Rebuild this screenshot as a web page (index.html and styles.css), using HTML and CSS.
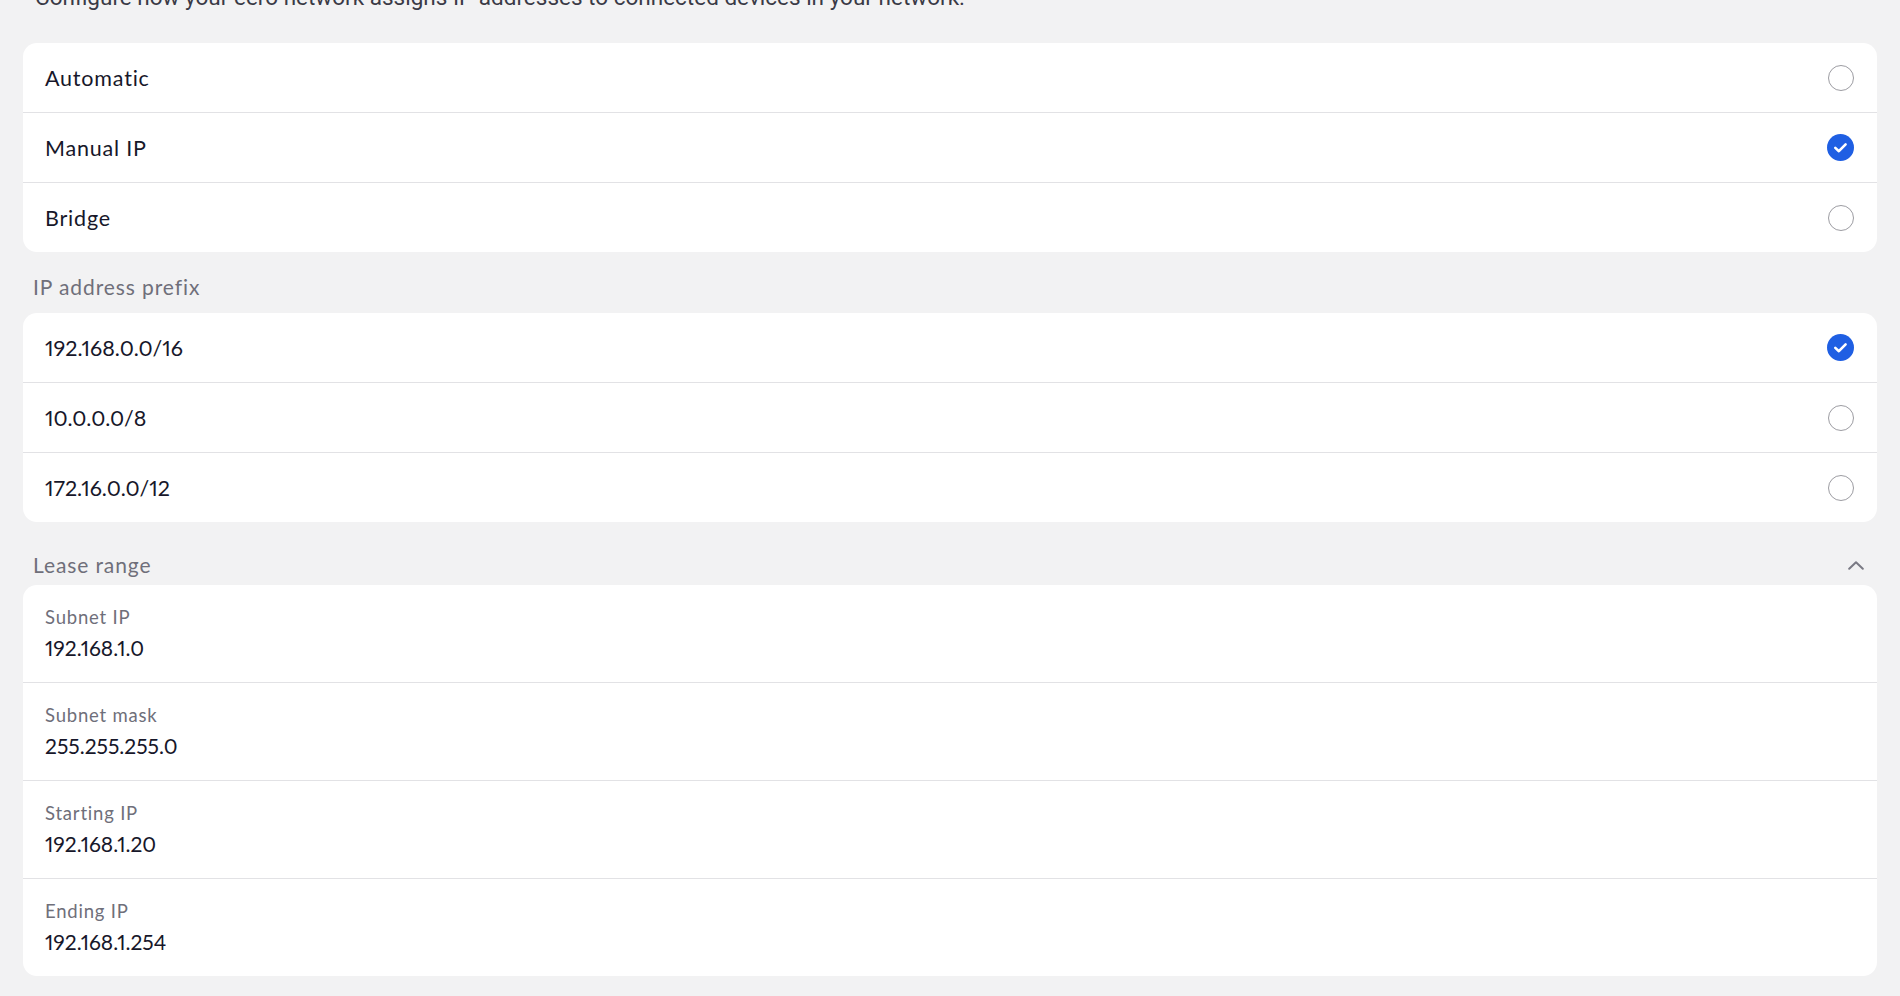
FILE: index.html
```html
<!DOCTYPE html>
<html lang="en">
<head>
  <meta charset="UTF-8">
  <meta name="viewport" content="width=device-width, initial-scale=1">
  <title>DHCP &amp; NAT</title>
  <link rel="stylesheet" href="styles.css">
</head>
<body>

<div class="page">
  <p class="intro">Configure how your eero network assigns IP addresses to connected devices in your network.</p>

  <div class="card">
    <div class="option">
      <span>Automatic</span>
      <span class="radio"></span>
    </div>
    <div class="option">
      <span>Manual IP</span>
      <svg class="check" width="27" height="27" viewBox="0 0 27 27">
        <circle cx="13.5" cy="13.5" r="13.5" fill="#1f5fe3"/>
        <path d="M8.3 13.9 L11.9 17.2 L18.6 10.4" fill="none" stroke="#fff" stroke-width="2.6" stroke-linecap="round" stroke-linejoin="round"/>
      </svg>
    </div>
    <div class="option">
      <span>Bridge</span>
      <span class="radio"></span>
    </div>
  </div>

  <div class="section-label">IP address prefix</div>

  <div class="card">
    <div class="option">
      <span class="num">192.168.0.0/16</span>
      <svg class="check" width="27" height="27" viewBox="0 0 27 27">
        <circle cx="13.5" cy="13.5" r="13.5" fill="#1f5fe3"/>
        <path d="M8.3 13.9 L11.9 17.2 L18.6 10.4" fill="none" stroke="#fff" stroke-width="2.6" stroke-linecap="round" stroke-linejoin="round"/>
      </svg>
    </div>
    <div class="option">
      <span class="num">10.0.0.0/8</span>
      <span class="radio"></span>
    </div>
    <div class="option">
      <span class="num">172.16.0.0/12</span>
      <span class="radio"></span>
    </div>
  </div>

  <div class="section-label collapsible">
    <span>Lease range</span>
    <svg width="16" height="9" viewBox="0 0 16 9">
      <polyline points="1.2,7.8 8,1.3 14.8,7.8" fill="none" stroke="#7a7a84" stroke-width="2" stroke-linecap="round" stroke-linejoin="round"/>
    </svg>
  </div>

  <div class="card">
    <div class="field">
      <div class="field-label">Subnet IP</div>
      <div class="field-value num">192.168.1.0</div>
    </div>
    <div class="field">
      <div class="field-label">Subnet mask</div>
      <div class="field-value num">255.255.255.0</div>
    </div>
    <div class="field">
      <div class="field-label">Starting IP</div>
      <div class="field-value num">192.168.1.20</div>
    </div>
    <div class="field">
      <div class="field-label">Ending IP</div>
      <div class="field-value num">192.168.1.254</div>
    </div>
  </div>
</div>

</body>
</html>
```

FILE: styles.css
```css
body {
  background-color: #f2f2f3;
  color: #17172a;
  font-family: Lato, "Open Sans", sans-serif;
  margin: 0;
}

.page {
  padding: 0 23px 20px;
}

.intro {
  font-family: Roboto, sans-serif;
  font-size: 22.5px;
  line-height: 26px;
  color: #3a3a46;
  margin: -16px 0 33px 12px;
  height: 26px;
  white-space: nowrap;
}

.card {
  background-color: #ffffff;
  border-radius: 14px;
  overflow: hidden;
}

.option {
  display: flex;
  align-items: center;
  justify-content: space-between;
  height: 69px;
  padding: 0 23px 0 22px;
  font-size: 21.5px;
  letter-spacing: 0.8px;
}

/* narrow ones in the addresses */
.num {
  font-variant-numeric: proportional-nums;
  letter-spacing: 0;
}

.option + .option,
.field + .field {
  border-top: 1px solid #e2e2e5;
}

.radio {
  width: 24px;
  height: 24px;
  border: 1.5px solid #9c9ca2;
  border-radius: 50%;
}

.check {
  display: block;
}

.section-label {
  font-size: 21px;
  line-height: 24px;
  letter-spacing: 0.9px;
  color: #6f6f7a;
  padding-left: 10px;
  margin: 23px 0 14px;
}

.collapsible {
  display: flex;
  align-items: center;
  justify-content: space-between;
  padding-right: 13px;
  margin: 31px 0 8px;
}

.field {
  padding: 21px 22px 21px;
}

.field-label {
  font-size: 18.5px;
  line-height: 22px;
  letter-spacing: 0.8px;
  color: #6f6f7a;
  margin-bottom: 7px;
}

.field-value {
  font-size: 21px;
  line-height: 26px;
}
```
